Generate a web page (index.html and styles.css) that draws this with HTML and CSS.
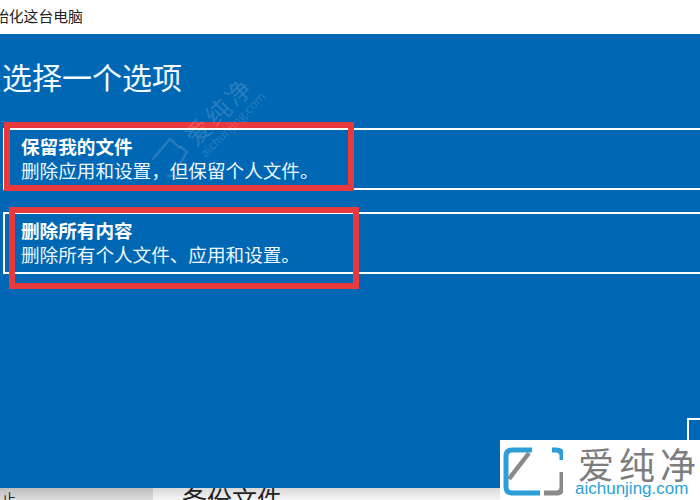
FILE: index.html
```html
<!DOCTYPE html>
<html lang="zh">
<head>
<meta charset="utf-8">
<title>初始化这台电脑</title>
<link rel="stylesheet" href="styles.css">
</head>
<body>
<div class="page">
  <header class="topbar"><span class="topbar-text">始化这台电脑</span></header>
  <main class="dialog">
    <h1 class="heading">选择一个选项</h1>
    <div class="option option-first">
      <div class="option-title">保留我的文件</div>
      <div class="option-desc">删除应用和设置，但保留个人文件。</div>
    </div>
    <div class="option option-second">
      <div class="option-title">删除所有内容</div>
      <div class="option-desc">删除所有个人文件、应用和设置。</div>
    </div>
  </main>
  <footer class="behind">
    <div class="behind-left"><span class="behind-left-text">止</span></div>
    <div class="behind-right"><span class="behind-title">备份文件</span></div>
  </footer>

  <div class="mark mark-one"></div>
  <div class="mark mark-two"></div>
  <div class="corner-box"></div>

  <div class="watermark">
    <div class="watermark-cn">爱纯净</div>
    <div class="watermark-en">aichunjing.com</div>
  </div>
  <svg class="watermark-icon" viewBox="0 0 60 50" width="60" height="50">
    <path d="M2 26 L20 5 L30 14" fill="none" stroke="#ffffff" stroke-opacity=".14" stroke-width="2.5"/>
    <path d="M30 12 L37 18 L30 30 M17 42 L30 42" fill="none" stroke="#ffffff" stroke-opacity=".14" stroke-width="2.5"/>
  </svg>

  <aside class="logo">
    <svg class="logo-icon" viewBox="0 0 60 50" width="60" height="50">
      <path d="M29 4 H9 Q3 4 3 10 V41 Q3 47 9 47 H37" fill="none" stroke="#2d9fd8" stroke-width="5"/>
      <path d="M49 4 H53 Q59 4 59 10 V14" fill="none" stroke="#2d9fd8" stroke-width="5"/>
      <path d="M6 33 L26 7" fill="none" stroke="#8a8a8a" stroke-width="4.5"/>
      <path d="M59 26 V41 Q59 47 53 47 H41" fill="none" stroke="#8a8a8a" stroke-width="5"/>
    </svg>
    <div class="logo-text">
      <div class="logo-cn">爱纯净</div>
      <div class="logo-en">aichunjing.com</div>
    </div>
  </aside>
</div>
</body>
</html>
```
FILE: styles.css
```css
* { box-sizing: border-box; }
html, body { margin: 0; padding: 0; }
body { font-family: "Noto Sans CJK SC", "Liberation Sans", sans-serif; }
.page {
  position: relative;
  width: 700px;
  height: 500px;
  overflow: hidden;
  display: flex;
  flex-direction: column;
  background: #fff;
}
.topbar {
  height: 34px;
  flex: none;
  display: flex;
  align-items: center;
  background: #fff;
  padding-bottom: 2px;
}
.topbar-text {
  margin-left: -6px;
  font-size: 14.8px;
  color: #222;
  line-height: 1;
}
.dialog {
  height: 454px;
  flex: none;
  background: #0067b4;
  padding: 25px 0 0 3px;
  color: #fff;
}
.heading {
  margin: 0 0 0 -1px;
  font-size: 30px;
  font-weight: 400;
  line-height: 34px;
  color: #f2fbff;
}
.option {
  width: 720px;
  height: 62px;
  border: 2px solid #fff;
  padding: 4px 0 0 16px;
  color: #eef8ff;
}
.option-first { margin-top: 35px; }
.option-second { margin-top: 22px; }
.option-title {
  font-size: 18.6px;
  line-height: 24px;
  font-weight: 700;
  color: #fff;
}
.option-desc {
  font-size: 18.6px;
  line-height: 24px;
  font-weight: 400;
}
.behind {
  flex: 1;
  display: flex;
  overflow: hidden;
}
.behind-left {
  width: 153px;
  background: linear-gradient(#bdbdbd, #dcdcdc);
  overflow: hidden;
}
.behind-left-text {
  display: block;
  margin: 3px 0 0 2px;
  font-size: 14px;
  line-height: 14px;
  color: #222;
}
.behind-right {
  flex: 1;
  background: linear-gradient(#d8d8d8, #f6f6f6);
  overflow: hidden;
}
.behind-title {
  display: block;
  margin: -5px 0 0 29px;
  font-size: 25px;
  line-height: 30px;
  color: #222;
}
.mark {
  position: absolute;
  border: 6px solid #e8393f;
}
.mark-one { left: 4px; top: 122px; width: 350px; height: 69px; }
.mark-two { left: 9px; top: 207px; width: 350px; height: 82px; }
.corner-box {
  position: absolute;
  left: 687px;
  top: 418px;
  width: 30px;
  height: 40px;
  border: 2px solid #fff;
}
.watermark {
  position: absolute;
  left: 158px;
  top: 95px;
  width: 130px;
  transform: rotate(-45deg);
  text-align: center;
  color: rgba(255, 255, 255, .16);
}
.watermark-cn { font-size: 25px; line-height: 26px; letter-spacing: 3px; }
.watermark-en { font-size: 12px; line-height: 14px; }
.watermark-icon { position: absolute; left: 150px; top: 134px; }
.logo {
  position: absolute;
  left: 500px;
  top: 440px;
  width: 200px;
  height: 60px;
  background: #fff;
  display: flex;
  gap: 12px;
  padding: 6px 0 0 3px;
}
.logo-icon { flex: none; }
.logo-text { display: flex; flex-direction: column; align-items: flex-start; white-space: nowrap; }
.logo-cn {
  font-size: 36px;
  line-height: 35px;
  letter-spacing: 5px;
  color: #7d7d7d;
  font-weight: 400;
  margin-left: 3px;
}
.logo-en {
  font-family: "Liberation Sans", sans-serif;
  font-size: 17px;
  line-height: 15px;
  color: #2d9fd8;
}
```
